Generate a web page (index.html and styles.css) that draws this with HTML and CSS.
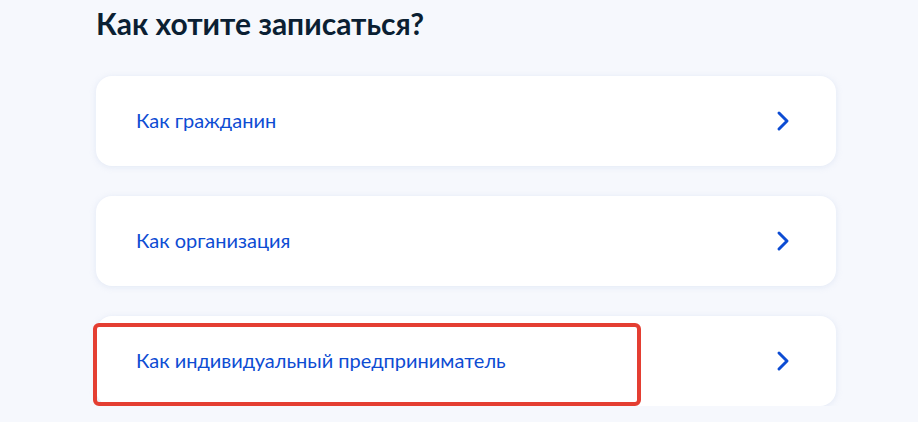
FILE: index.html
```html
<!DOCTYPE html>
<html lang="ru">
<head>
    <meta charset="UTF-8">
    <meta name="viewport" content="width=device-width, initial-scale=1.0">
    <title>Как хотите записаться?</title>
    <link rel="stylesheet" href="styles.css">
</head>
<body>

    <div class="page">
        <h1 class="page-title">Как хотите записаться?</h1>

        <div class="choice-list">
            <a class="choice-card" href="#">
                <span class="choice-text">Как гражданин</span>
                <svg class="chevron" viewBox="0 0 14 22"><polyline points="3,3 11,11 3,19"></polyline></svg>
            </a>

            <a class="choice-card" href="#">
                <span class="choice-text">Как организация</span>
                <svg class="chevron" viewBox="0 0 14 22"><polyline points="3,3 11,11 3,19"></polyline></svg>
            </a>

            <!-- highlighted option -->
            <a class="choice-card" href="#">
                <span class="choice-text">Как индивидуальный предприниматель</span>
                <svg class="chevron" viewBox="0 0 14 22"><polyline points="3,3 11,11 3,19"></polyline></svg>
                <span class="highlight-frame"></span>
            </a>
        </div>
    </div>

</body>
</html>
```

FILE: styles.css
```css
html, body {
    margin: 0;
    padding: 0;
    background-color: #f6f8fd;
    font-family: Lato, "Noto Sans", sans-serif;
    overflow: hidden;
}

.page {
    width: 740px;
    padding-left: 96px;
}

.page-title {
    margin: 0;
    padding-top: 3px;
    font-size: 30px;
    line-height: 40px;
    font-weight: bold;
    color: #0b1f33;
}

.choice-list {
    display: flex;
    flex-direction: column;
    gap: 30px;
    margin-top: 33px;
}

.choice-card {
    position: relative;
    display: flex;
    align-items: center;
    justify-content: space-between;
    height: 90px;
    padding: 0 46px 0 40px;
    box-sizing: border-box;
    background: #fff;
    border-radius: 16px;
    box-shadow: 0 1px 6px rgba(180, 195, 225, 0.3);
    text-decoration: none;
}

.choice-text {
    font-size: 20px;
    line-height: 24px;
    padding-bottom: 2px;
    color: #0d4cd3;
}

.chevron {
    width: 14px;
    height: 22px;
}

.chevron polyline {
    fill: none;
    stroke: #0d4cd3;
    stroke-width: 3;
    stroke-linecap: round;
    stroke-linejoin: round;
}

/* red annotation box drawn over the last card */
.highlight-frame {
    position: absolute;
    left: -3px;
    top: 7px;
    width: 548px;
    height: 83px;
    box-sizing: border-box;
    border: 4px solid #e43e32;
    border-radius: 6px;
}
```
